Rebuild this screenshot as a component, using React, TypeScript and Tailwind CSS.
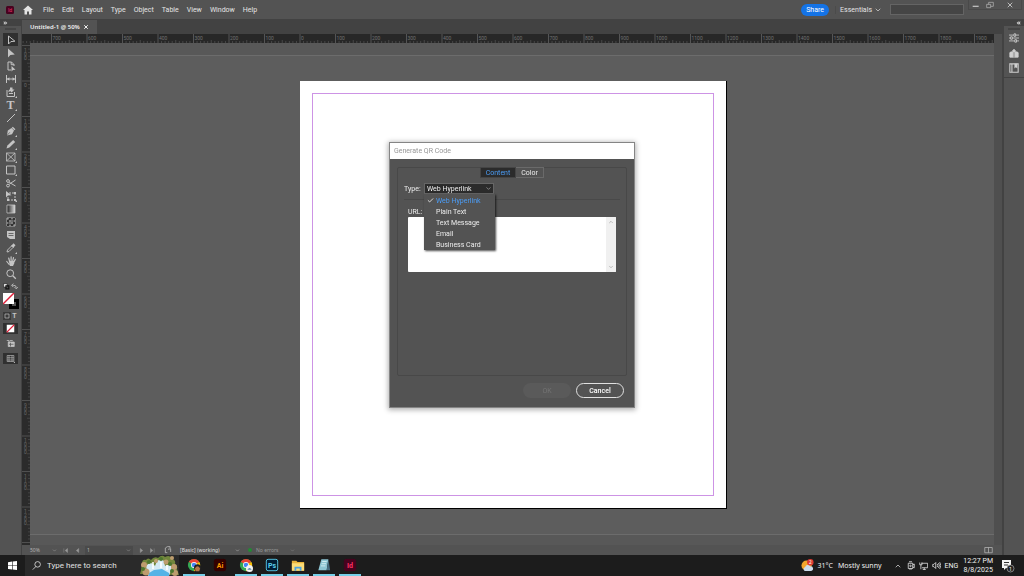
import type { ReactNode } from "react";
import { ChevronDown, ChevronUp, Check, X } from "lucide-react";

const menus = ["File", "Edit", "Layout", "Type", "Object", "Table", "View", "Window", "Help"];
const qrTypes = ["Web Hyperlink", "Plain Text", "Text Message", "Email", "Business Card"];

const Icon = ({ children, className = "size-3" }: { children: ReactNode; className?: string }) => (
  <svg viewBox="0 0 12 12" className={`shrink-0 ${className}`} fill="none" stroke="currentColor" strokeWidth="1" aria-hidden="true">
    {children}
  </svg>
);

const Corner = () => <path d="M12 10v2h-2z" fill="currentColor" stroke="none" />;

const tools: { name: string; icon: ReactNode }[] = [
  { name: "Selection", icon: <path d="M3.5 2v8l2.4-2.4 4-.4z" /> },
  { name: "Direct Selection", icon: <path d="M3 1.5v9l2.4-2.6 4.4-.4z" fill="currentColor" stroke="none" /> },
  { name: "Page", icon: <><path d="M6 10H3V2h3.5L9 4.5V6M6.2 2v2.7H9" /><path d="M6.5 6v5.5L8 10l2.5-.3z" fill="currentColor" stroke="none" /></> },
  { name: "Gap", icon: <><path d="M1.5 2v8M10.5 2v8M2 6h8" /><path d="M2 6l2.4-1.8v3.6zM10 6L7.6 4.2v3.6z" fill="currentColor" stroke="none" /></> },
  { name: "Content Collector", icon: <><path d="M2 4v6.500h7.500V6M4 7.500h4M4 6V4.500h2" /><path d="M5 1.500h2.500v2H9.500L6.500 6.500 4 3.500h1z" fill="currentColor" stroke="none" /><Corner /></> },
  { name: "Type", icon: <><text x="5.500" y="10" textAnchor="middle" fontSize="12" fill="currentColor" stroke="none" className="font-['Liberation_Serif',serif] font-bold">T</text><Corner /></> },
  { name: "Line", icon: <path d="M2 10l8-8" /> },
  { name: "Pen", icon: <><path d="M2 10.500l.8-5L6.500 3 9 5.500 7 9.300z" fill="currentColor" stroke="none" /><path d="M7.300 2.200l2.600 2.600" strokeWidth="1.500" /><path d="M2 10.500l2.800-3.200" stroke="#535353" strokeWidth=".7" /><Corner /></> },
  { name: "Pencil", icon: <><path d="M1.500 10.500l.9-3 5.800-5.600 2 2-5.800 5.700z" fill="currentColor" stroke="none" /><Corner /></> },
  { name: "Rectangle Frame", icon: <><path d="M1.500 2h8.500v8H1.500zl8.500 8M10 2l-8.500 8" strokeWidth=".8" /><Corner /></> },
  { name: "Rectangle", icon: <><path d="M1.500 2h8.500v8H1.500z" /><Corner /></> },
  { name: "Scissors", icon: <><path d="M4.200 5.400L10.500 9M4.200 7.200L10.500 3" /><circle cx="3" cy="4" r="1.400" /><circle cx="3" cy="8.600" r="1.400" /></> },
  { name: "Free Transform", icon: <><path d="M4 3h6v7H3V7" strokeDasharray="2 1" /><path d="M9 2h2v2H9zM9 9h2v2H9zM2 9h2v2H2z" fill="currentColor" stroke="none" /><path d="M1 1v6.500l2-2 3.500-.3z" fill="currentColor" stroke="none" /><Corner /></> },
  { name: "Gradient Swatch", icon: <><defs><linearGradient id="swatch"><stop stopColor="#222" /><stop offset="1" stopColor="#ddd" /></linearGradient></defs><path d="M2 2h8v8H2z" fill="url(#swatch)" strokeWidth=".8" /></> },
  { name: "Gradient Feather", icon: <><path d="M2 2h8v8H2z" strokeWidth=".8" /><path d="M4 2h2v2H4zM8 2h2v2H8zM2 4h2v2H2zM6 4h2v2H6zM4 6h2v2H4zM8 6h2v2H8zM2 8h2v2H2zM6 8h2v2H6z" fill="#333" stroke="none" /><path d="M4 4h4v4H4z" fill="currentColor" fillOpacity=".4" stroke="none" /></> },
  { name: "Note", icon: <><path d="M2 2h8v8H5L2 8z" fill="currentColor" stroke="none" /><path d="M3.500 4.500h5M3.500 6.500h5" stroke="#535353" strokeWidth=".8" /></> },
  { name: "Eyedropper", icon: <><path d="M2 10l.5-2L6.500 4 8 5.500 4 9.500z" strokeWidth=".9" /><path d="M5.800 3.300L7 3l1.500-1.700 2 2L9 5l-.4 1z" fill="currentColor" stroke="none" /><Corner /></> },
  { name: "Hand", icon: <><path d="M4.200 9.500L1.800 6.500M4.600 6.500L3.700 3M6.100 6V1.800M7.600 6.300l.9-3.600M8.900 7l1.400-2.600" strokeWidth="1.200" strokeLinecap="round" /><path d="M3.800 6h5.400v2.500L8 11H5z" fill="currentColor" stroke="none" /></> },
  { name: "Zoom", icon: <><circle cx="5.200" cy="5.200" r="3.400" /><path d="M7.800 7.800l3 3" strokeWidth="1.300" /></> },
];

// document units per major tick and their on-screen length
const UNIT = 100;
const STEP = 35.5;

const ticks = (first: number, count: number, origin: number) =>
  Array.from({ length: count }, (_, i) => ({ value: (first + i) * UNIT, at: origin + (first + i) * STEP }));

const minor = Array.from({ length: 9 }, (_, i) => i + 1);

const HorizontalRuler = () => (
  <svg className="block h-[9px] w-full bg-[#272727]" aria-hidden="true">
    {ticks(-8, 28, 278).map(({ value, at }) => (
      <g key={value} stroke="#555">
        <path d={`M${at} 0v9`} />
        {minor.map((n) => (
          <path key={n} d={`M${at + (n * STEP) / 10} ${n === 5 ? 6 : 7}V9`} stroke="#484848" />
        ))}
        {at > 0 && <text x={at + 1} y="6" fontSize="5" fill="#707070" stroke="none">{Math.abs(value)}</text>}
      </g>
    ))}
  </svg>
);

const VerticalRuler = () => (
  <svg className="block h-full w-2 shrink-0 bg-[#2b2b2b]" aria-hidden="true">
    {ticks(-2, 16, 38).map(({ value, at }) => (
      <g key={value} stroke="#505050">
        <path d={`M0 ${at}h8`} />
        {minor.map((n) => (
          <path key={n} d={`M${n === 5 ? 5 : 6} ${at + (n * STEP) / 10}H8`} stroke="#444" />
        ))}
        {at > 0 && at < 480 && String(Math.abs(value)).split("").map((digit, i) => (
          <text key={i} x="2" y={at + 6 + i * 4} fontSize="5" fill="#686868" stroke="none">{digit}</text>
        ))}
      </g>
    ))}
  </svg>
);

const MenuBar = () => (
  <header className="flex h-[19px] shrink-0 items-center bg-[#535353] pl-[5px] text-[#e4e4e4]">
    <svg viewBox="0 0 10 10" className="size-[10px]" aria-label="InDesign">
      <rect x="1" y="1" width="8" height="8" rx="1.500" fill="#49021f" />
      <text x="5" y="6.800" fontSize="5" textAnchor="middle" fill="#e9366f">Id</text>
    </svg>
    <button aria-label="Home" className="mr-[9px] ml-[7px]">
      <svg viewBox="0 0 12 12" className="size-3" fill="#e4e4e4">
        <path d="M6 1.500L1 6h1.500v4.500H5V7.500h2v3h2.500V6H11z" />
      </svg>
    </button>
    <nav className="flex gap-2">
      {menus.map((menu) => (
        <button key={menu}>{menu}</button>
      ))}
    </nav>
    <div className="ml-auto flex items-center">
      <button className="h-[12px] w-7 rounded-full bg-[#1473e6] text-white">Share</button>
      <button className="ml-[6px] flex items-center gap-[2px] border-l border-[#4b4b4b] pl-1">
        Essentials <ChevronDown className="size-2" />
      </button>
      <input aria-label="Search" className="ml-2 h-[11px] w-[74px] border border-[#646464] bg-[#454545] px-1" />
    </div>
    <div className="mr-[2px] ml-1 flex h-[10px] w-[54px] items-center justify-between self-start border-x border-b border-[#494949] text-[#bbb]">
      <button aria-label="Minimize" className="px-[3px]"><Icon className="size-2"><path d="M1 8h9" strokeWidth="2" /></Icon></button>
      <button aria-label="Restore" className="mr-1 ml-[3px]"><Icon className="size-2"><path d="M1 5h6v5H1zM4 5V2h7v6H7" /></Icon></button>
      <button aria-label="Close" className="px-2"><X className="size-2" strokeWidth={3} /></button>
    </div>
  </header>
);

const Toolbar = () => (
  <aside className="flex w-[22px] shrink-0 flex-col border-r border-[#424242] bg-[#535353] text-[#c4c4c4]">
    <div className="flex h-[7px] items-center bg-[#424242] pl-[3px]">
      <Icon className="h-1 w-[5px]"><path d="M1 1l5 5-5 5M6 1l5 5-5 5" fill="currentColor" /></Icon>
    </div>
    <div className="mx-[5px] my-[2px] h-[2px] bg-[#454545]" />
    <div className="flex flex-col items-center pt-px">
      {tools.map(({ name, icon }, i) => (
        <button key={name} aria-label={name} className={`flex h-[13px] w-[15px] items-center justify-center ${i === 0 ? "bg-[#303030]" : ""}`}>
          <Icon className="size-3">{icon}</Icon>
        </button>
      ))}
    </div>
    <div className="mx-[3px] mt-[3px] flex justify-between">
      <Icon className="size-[7px]"><path d="M1 1h6v6H1z" fill="#eee" stroke="#111" /><path d="M5 5h5v5H5z" stroke="#111" strokeWidth="2" /></Icon>
      <Icon className="size-[7px]"><path d="M2 4h3q4 0 4 4M4 1L1 4l3 3M6 7l3 3 3-3" strokeWidth="1.500" /></Icon>
    </div>
    <svg viewBox="0 0 16 16" className="mt-[3px] ml-[3px] size-4" aria-label="Fill and stroke">
      <path d="M6 6h10v10H6z" fill="#000" />
      <path d="M9 9h4v4H9z" fill="#535353" />
      <path d="M0 0h11v11H0z" fill="#fff" />
      <path d="M0 11L11 0" stroke="#e0203a" strokeWidth="1.500" />
    </svg>
    <div className="mx-[3px] mt-[3px] flex justify-between">
      <button aria-label="Container" className="bg-[#3a3a3a]"><Icon className="size-2"><path d="M3 3h6v6H3z" /></Icon></button>
      <button aria-label="Text formatting" className="flex w-2 justify-center leading-[8px] font-bold">T</button>
    </div>
    <button aria-label="Apply none" className="mx-[3px] mt-[3px] flex h-[11px] items-center justify-center bg-[#303030]">
      <Icon className="h-[9px] w-[11px]"><path d="M1 1h10v10H1z" fill="#fff" stroke="none" /><path d="M1 11L11 1" stroke="#e0203a" strokeWidth="1.500" /></Icon>
    </button>
    <button aria-label="View options" className="mx-auto mt-[5px]">
      <Icon className="size-[9px]"><path d="M3 4h8v6H3z" fill="currentColor" /><path d="M1 2h3v3M5 2h4" /><path d="M4 7h6M6 5v5" stroke="#535353" /></Icon>
    </button>
    <button aria-label="Screen mode" className="mx-[3px] mt-[5px] flex h-[11px] items-center justify-center bg-[#303030]">
      <Icon className="size-[9px]"><path d="M1.500 2h9v8h-9zM4 2v8M8 2v8M1.500 5h9M1.500 8h9" strokeWidth=".8" /><Corner /></Icon>
    </button>
  </aside>
);

const PanelDock = () => (
  <aside className="w-[22px] shrink-0 border-l-2 border-[#424242] bg-[#535353] text-[#d0d0d0]">
    <div className="flex h-[7px] items-center justify-end bg-[#424242] pr-[3px]">
      <Icon className="h-1 w-[5px]"><path d="M6 1L1 6l5 5M11 1L6 6l5 5" fill="currentColor" /></Icon>
    </div>
    <div className="mx-1 my-[2px] h-[2px] bg-[#454545]" />
    <div className="flex flex-col items-center gap-[5px] border-b border-[#424242] pt-px pb-1">
      <button aria-label="Properties"><Icon className="size-[10px]"><path d="M0 2.500h12M0 6h12M0 9.500h12" /><path d="M6 1h2v3H6zM2 4.500h2v3H2zM7 8h2v3H7z" fill="#535353" /></Icon></button>
      <button aria-label="CC Libraries"><Icon className="size-[10px]"><path d="M1 5.500Q2.500 4 4.500 5v6H1zM7.500 5Q9.500 4 11 5.500V11H7.500z" fill="currentColor" /><path d="M4.500 3L6 1.500 7.500 3v8h-3z" fill="currentColor" /><path d="M6 5v6.500" stroke="#535353" strokeWidth=".7" /></Icon></button>
      <button aria-label="Pages"><Icon className="size-[10px]"><path d="M1 1h10v10H1zM3.500 1v10" strokeWidth="1.300" /><path d="M6.500 1h3.500v5.500L8.200 5 6.500 6.500z" fill="currentColor" stroke="none" /></Icon></button>
    </div>
  </aside>
);

const StatusBar = () => (
  <footer className="flex h-[10px] shrink-0 items-center bg-[#535353] pl-2 font-['Noto_Sans',sans-serif] text-[5px] text-[#b5b5b5]">
    <button className="flex w-[27px] items-center justify-between">50% <ChevronDown className="size-[5px]" /></button>
    <button aria-label="First page" className="ml-1 px-[2px] text-[#999]"><Icon className="size-[5px]"><path d="M2 1v10M11 1L5 6l6 5z" fill="currentColor" /></Icon></button>
    <button aria-label="Previous page" className="ml-[3px] px-[2px] text-[#999]"><Icon className="size-[5px]"><path d="M9 1L3 6l6 5z" fill="currentColor" /></Icon></button>
    <label className="ml-[3px] flex w-12 items-center bg-[#4a4a4a] px-[2px]">
      <input aria-label="Page" defaultValue="1" className="h-[9px] w-0 grow" />
      <ChevronDown className="size-[5px]" />
    </label>
    <button aria-label="Next page" className="ml-1 px-[2px] text-[#999]"><Icon className="size-[5px]"><path d="M3 1l6 5-6 5z" fill="currentColor" /></Icon></button>
    <button aria-label="Last page" className="ml-[2px] px-[2px] text-[#999]"><Icon className="size-[5px]"><path d="M10 1v10M1 1l6 5-6 5z" fill="currentColor" /></Icon></button>
    <button aria-label="Open" className="ml-[7px]"><Icon className="size-2"><path d="M2 10V3l3-2h4v2M6 5l4-1v5M2 10h3" strokeWidth="1.300" /></Icon></button>
    <button className="ml-2 flex w-[60px] items-center justify-between font-medium text-[#d8d8d8]">[Basic] (working) <ChevronDown className="size-[5px]" /></button>
    <button className="ml-2 flex w-[47px] items-center text-[#999]">
      <span className="mr-1 size-1 rounded-full bg-[#238a35]" />
      No errors <ChevronDown className="ml-auto size-[5px]" />
    </button>
    <button aria-label="Split layout" className="mr-[9px] ml-auto"><Icon className="size-[9px]"><path d="M1 2h10v7H1zM6 2v7" /></Icon></button>
  </footer>
);

const QrDialog = () => (
  <section role="dialog" aria-label="Generate QR Code" className="flex h-[266px] w-[246px] flex-col border border-[#858585] bg-[#535353] text-[#ececec] shadow-[0_1px_5px_1px_rgba(0,0,0,0.3)]">
    <h1 className="flex h-4 shrink-0 items-center bg-white pl-1 text-[#979797]">Generate QR Code</h1>
    <div className="mx-[7px] mt-2 grow rounded-[2px] border border-[#484848]">
      <div role="tablist" className="-mt-px flex justify-center">
        <button role="tab" aria-selected="true" className="h-[11px] w-9 border border-[#444] bg-[#2b2b2b] text-[#4b9cf5]">Content</button>
        <button role="tab" aria-selected="false" className="h-[11px] w-7 border border-l-0 border-[#6a6a6a]">Color</button>
      </div>
      <div className="mt-[5px] flex h-[11px] items-center pl-[6px]">
        <label htmlFor="qr-type" className="w-5">Type:</label>
        <div className="relative">
          <select id="qr-type" className="block h-[11px] w-[70px] appearance-none border border-[#666] bg-[#2b2b2b] pl-[2px]">
            {qrTypes.map((type) => (
              <option key={type}>{type}</option>
            ))}
          </select>
          <ChevronDown className="pointer-events-none absolute top-[2px] right-[2px] size-[7px] text-[#b5b5b5]" />
          <ul role="listbox" aria-label="Type options" className="absolute top-[11px] left-0 w-[71px] bg-[#535353] pt-px shadow-[1px_1px_2px_rgba(0,0,0,0.7)]">
            {qrTypes.map((type, i) => (
              <li key={type} role="option" aria-selected={i === 0} className={`flex h-[11px] items-center ${i === 0 ? "text-[#4b9cf5]" : ""}`}>
                <span className="flex w-3 justify-center">{i === 0 && <Check className="size-[7px] text-[#ececec]" strokeWidth={3} />}</span>
                {type}
              </li>
            ))}
          </ul>
        </div>
      </div>
      <hr className="mx-[6px] mt-[5px] border-[#494949]" />
      <div className="px-[10px] pt-[7px]">
        <label htmlFor="qr-url" className="block h-[10px] leading-[10px]">URL:</label>
        <div className="flex h-[55px] overflow-hidden rounded-[1px] bg-white">
          <textarea id="qr-url" className="grow resize-none p-1 text-[#222] outline-none" />
          <div className="flex w-[10px] flex-col items-center justify-between bg-[#f0f0f0] py-[2px] text-[#888]">
            <ChevronUp className="size-[6px]" />
            <ChevronDown className="size-[6px]" />
          </div>
        </div>
      </div>
    </div>
    <div className="flex justify-end gap-[5px] pt-[7px] pr-[10px] pb-[9px]">
      <button disabled className="h-[15px] w-12 rounded-full bg-[#5a5a5a] text-[#747474]">OK</button>
      <button className="h-[15px] w-12 rounded-full border border-[#e0e0e0] font-medium text-white">Cancel</button>
    </div>
  </section>
);

const Chrome = () => (
  <>
    <circle cx="8" cy="8" r="7" fill="#34a853" />
    <path d="M8 8L2 4.400A7 7 0 0 1 14 4.500z" fill="#ea4335" />
    <path d="M8 8l6.100-3.500A7 7 0 0 1 8 15z" fill="#fbbc05" />
    <circle cx="8" cy="8" r="3.400" fill="#fff" />
    <circle cx="8" cy="8" r="2.600" fill="#4285f4" />
  </>
);

const Badge = ({ label, bg, fg }: { label: string; bg: string; fg: string }) => (
  <>
    <rect x="1.500" y="1.500" width="13" height="13" rx="2" fill={bg} stroke={label === "Ps" ? fg : bg} />
    <text x="8" y="11" fontSize="8" fontWeight="700" textAnchor="middle" fill={fg}>{label}</text>
  </>
);

const apps: { name: string; open: boolean; icon: ReactNode }[] = [
  { name: "Chrome", open: true, icon: <><Chrome /><circle cx="12" cy="11" r="4" fill="#222" /><path d="M9 12q3-5 6 0l-1 3h-4z" fill="#b27548" /></> },
  { name: "Illustrator", open: false, icon: <Badge label="Ai" bg="#330000" fg="#ff9a00" /> },
  { name: "Chrome profile", open: true, icon: <><Chrome /><circle cx="12" cy="12" r="4" fill="#f2f2f2" /><path d="M9.500 13.500q2.500-4 5 0z" fill="#5587a8" /></> },
  { name: "Photoshop", open: true, icon: <Badge label="Ps" bg="#001e36" fg="#5bd0ef" /> },
  { name: "File Explorer", open: true, icon: <><path d="M1 3h5l1.500 1.500H15v10H1z" fill="#e8b33b" /><path d="M1 6h14v8.500H1z" fill="#fcdc76" /><path d="M4 10h8v4.500h-2V12H6v2.500H4z" fill="#4ba3df" /></> },
  { name: "Notepad", open: true, icon: <><path d="M5 1.500h8L11 14H1.500z" fill="#8dc5d3" /><path d="M6 4h5M5.300 6.500h5M4.600 9h5" stroke="#d9f1f5" /><path d="M11 14l2-12.500 2 12.500z" fill="#476d80" /></> },
  { name: "InDesign", open: true, icon: <Badge label="Id" bg="#49021f" fg="#ff3366" /> },
];

const Waterfall = () => (
  <svg viewBox="0 0 40 21" className="h-[21px] w-10" aria-hidden="true">
    <path d="M1 19Q3 12 3 9q0-5 4-4 2-3 5 0 3-4 7-2 4-4 7-1 5-3 7 2 4 1 3 5 3 1 2 5l2 6z" fill="#71863c" />
    <path d="M7 11q5-6 9 0l2-5q4-3 7 0l1 5q5-3 7 1l-3 9H9z" fill="#d5eaf5" />
    <path d="M10 18l5-3 8-1 7 4v3H9z" fill="#55b3e6" />
    <g fill="#bd9c6e">
      <circle cx="5" cy="10" r="3" /><circle cx="17" cy="6" r="2" /><circle cx="27" cy="7" r="2.500" />
      <circle cx="33" cy="3" r="2" /><circle cx="35" cy="12" r="3" /><circle cx="7" cy="17" r="3.500" /><circle cx="36" cy="18" r="3" />
    </g>
    <g fill="#4c762f"><circle cx="10" cy="7" r="2" /><circle cx="22" cy="4" r="2" /><circle cx="31" cy="9" r="2" /><circle cx="4" cy="14" r="2" /><circle cx="33" cy="16" r="2" /></g>
    <path d="M14 7v7M22 7v6M28 10v5" stroke="#fff" strokeWidth="1.500" />
  </svg>
);

const Taskbar = () => (
  <footer className="flex h-[21px] shrink-0 items-center bg-[#1c1c1c] text-[#f0f0f0]">
    <button aria-label="Start" className="flex w-[25px] justify-center">
      <Icon className="size-[9px]"><path d="M0 1.500l5.500-.7v4.900H0zM6.300.7L12 0v5.700H6.300zM0 6.400h5.500v4.900L0 10.500zM6.300 6.400H12V12l-5.700-.7z" fill="#fff" stroke="none" /></Icon>
    </button>
    <label className="flex h-full w-[154px] items-center bg-[#2a2a2a] pl-[7px]">
      <Icon className="size-[9px]"><circle cx="7.500" cy="4.500" r="3.700" /><path d="M5 7.500L1 11.500" /></Icon>
      <input aria-label="Search" placeholder="Type here to search" className="ml-[6px] h-[15px] w-0 grow text-[8px] placeholder:text-[#e0e0e0]" />
      <Waterfall />
    </label>
    <nav className="ml-[2px] flex h-full">
      {apps.map(({ name, open, icon }) => (
        <button key={name} aria-label={name} className={`mx-[2px] flex w-[22px] items-center justify-center border-b-2 ${open ? "border-[#76cfe8]" : "border-transparent"}`}>
          <svg viewBox="0 0 16 16" className="size-[14px]">{icon}</svg>
        </button>
      ))}
    </nav>
    <button className="ml-auto flex items-center font-['Noto_Sans',sans-serif]">
      <svg viewBox="0 0 14 14" className="mr-1 size-[13px]" aria-hidden="true">
        <circle cx="6" cy="7" r="5.500" fill="#f3a52b" />
        <path d="M4 13a2.500 2.500 0 0 1 .5-4.500A3 3 0 0 1 10 8a2.500 2.500 0 0 1 1 5z" fill="#ccdcec" />
        <circle cx="10" cy="3.500" r="3.500" fill="#dc3b32" />
        <text x="10" y="5.500" fontSize="5" textAnchor="middle" fill="#fff">2</text>
      </svg>
      <span className="mr-[5px]">31°C</span>
      <span>Mostly sunny</span>
    </button>
    <div className="ml-3 flex items-center gap-1">
      <ChevronUp className="size-2" />
      <Icon className="size-[9px]"><path d="M3 3h6v7H3zM4 1h4M4 12h4M9 5l2-1v5L9 8" /><circle cx="6" cy="6.500" r="1" /></Icon>
      <Icon className="size-[9px]"><path d="M3 3h8.500v6H4M7 9v2M5 11.300h4M1 2v3h3V2M2.500 5v6" /></Icon>
      <Icon className="size-[9px]"><path d="M1 4.500h1.500L5 2v8L2.500 7.500H1zM7 4q1.500 2 0 4M8.600 2.800q2.600 3.200 0 6.400M10.200 1.500q3.400 4.500 0 9" /></Icon>
      <span>ENG</span>
    </div>
    <div className="ml-[5px] text-center leading-[9px]">
      <div>12:27 PM</div>
      <div>8/8/2025</div>
    </div>
    <button aria-label="Notifications" className="mr-[9px] ml-2">
      <svg viewBox="0 0 14 14" className="size-[14px]">
        <path d="M1 1h9v8H5l-2 2V9H1z" fill="#f5f5f5" />
        <path d="M3 3.500h5M3 6h4" stroke="#333" />
        <circle cx="9.500" cy="9.500" r="3.500" fill="#222" stroke="#aaa" strokeWidth=".7" />
        <text x="9.500" y="11.500" fontSize="5" textAnchor="middle" fill="#fff">1</text>
      </svg>
    </button>
  </footer>
);

const App = () => {
  return (
    <div className="flex h-screen flex-col overflow-hidden bg-[#535353] font-['Roboto','Noto_Sans',sans-serif] text-[7px] leading-[8px]">
      <MenuBar />
      <div className="flex min-h-0 grow">
        <Toolbar />
        <main className="flex min-w-0 grow flex-col">
          <div className="flex h-[15px] shrink-0 items-end bg-[#424242]">
            <div role="tab" className="flex h-[14px] items-center gap-[3px] bg-[#535353] px-2 font-['Noto_Sans',sans-serif] text-[6px] font-semibold text-[#f0f0f0]">
              Untitled-1 @ 50%
              <button aria-label="Close document"><X className="size-[6px]" strokeWidth={4} /></button>
            </div>
          </div>
          <div className="flex min-h-0 grow">
            <div className="flex min-w-0 grow flex-col">
              <HorizontalRuler />
              <div className="flex min-h-0 grow">
                <VerticalRuler />
                <div className="flex min-w-0 grow flex-col bg-[#585858] pt-3 pb-[10px]">
                  <div className="flex min-h-0 grow items-center justify-center border-y border-[#6c6c6c] bg-[#5d5d5d] pl-[2px]">
                    <div className="h-[428px] w-[427px] shrink-0 border-r border-b border-black bg-white p-3">
                      <div className="h-full border border-[#cd93e5]" />
                    </div>
                  </div>
                </div>
              </div>
            </div>
            <div className="w-2 shrink-0 bg-[#4f4f4f]" />
          </div>
          <StatusBar />
        </main>
        <PanelDock />
      </div>
      <Taskbar />
      <div className="fixed inset-0 flex items-center justify-center pb-[26px]">
        <QrDialog />
      </div>
    </div>
  );
};

export default App;
